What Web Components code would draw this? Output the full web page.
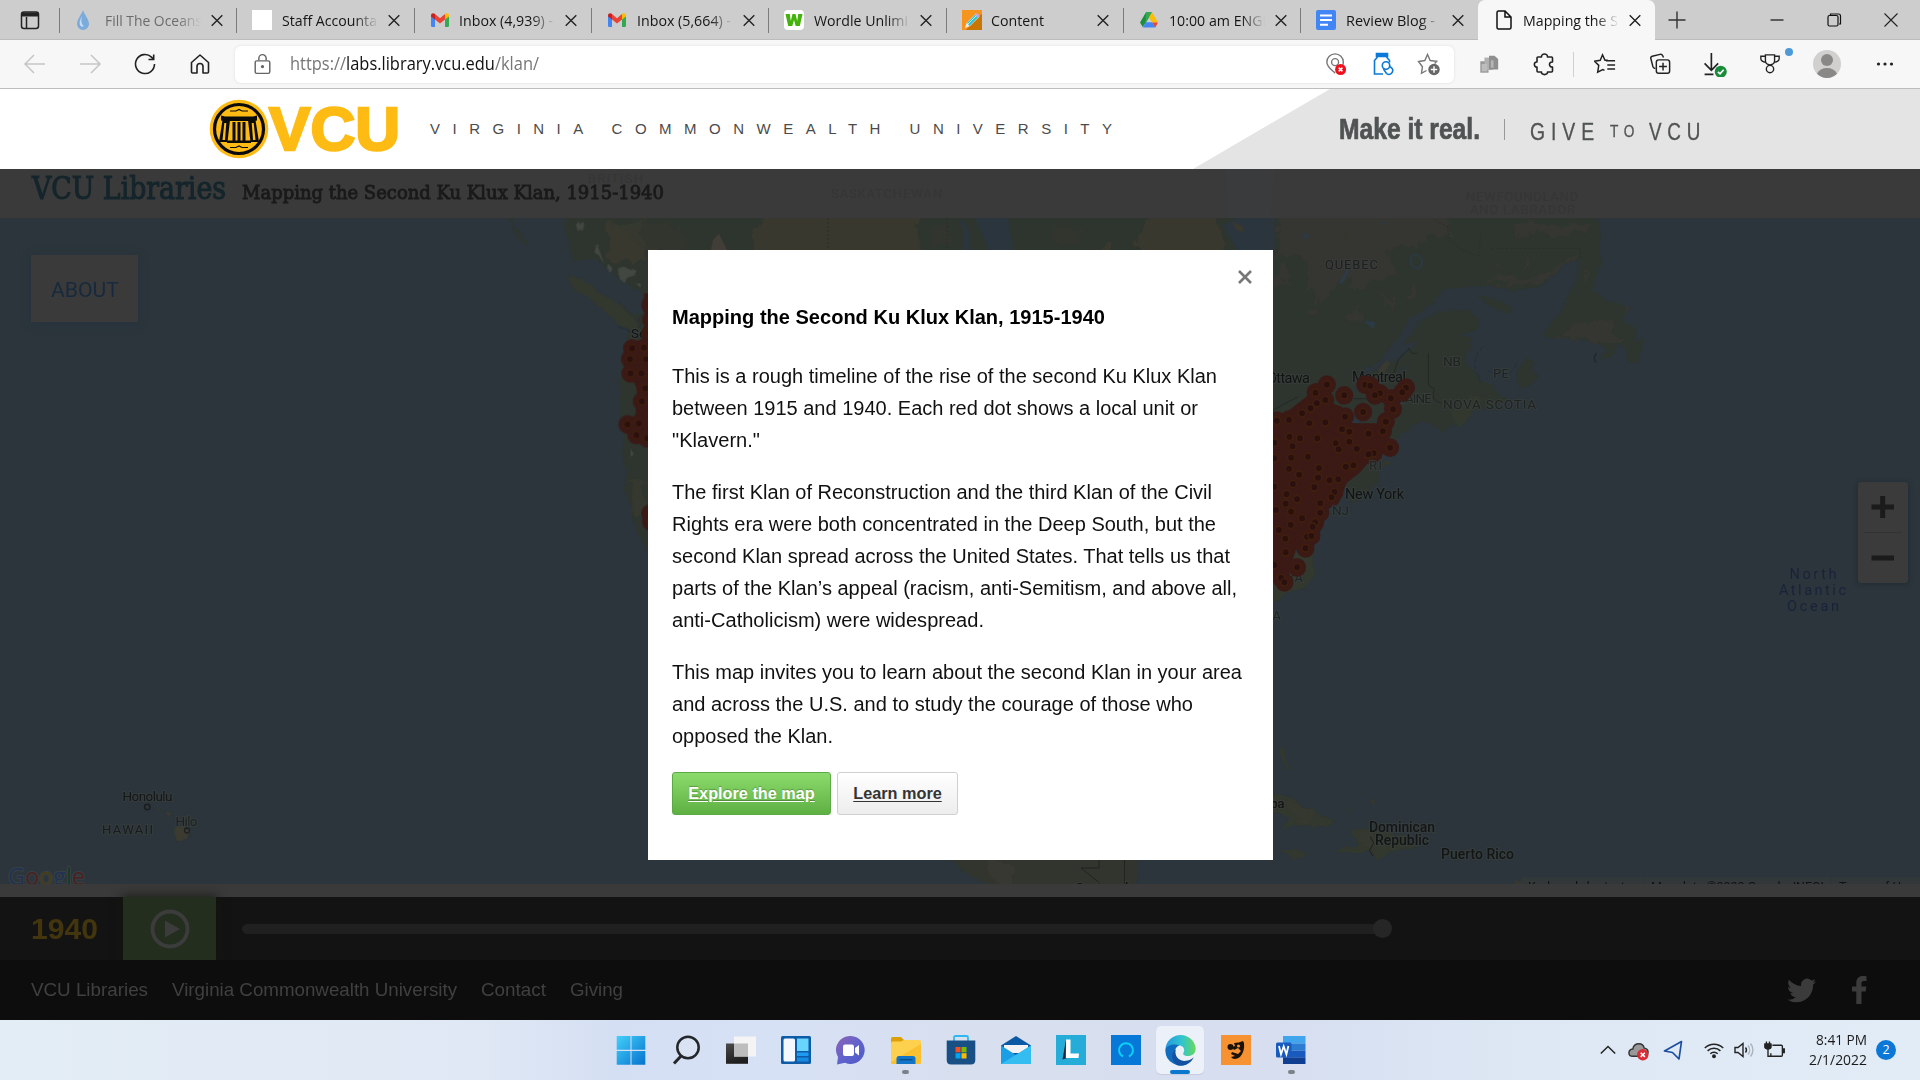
<!DOCTYPE html>
<html lang="en">
<head>
<meta charset="utf-8">
<title>Mapping the Second Ku Klux Klan, 1915-1940</title>
<style>
html,body{margin:0;height:100%;overflow:hidden;background:#fff;font-family:"Liberation Sans",Arial,sans-serif}
</style>
</head>
<body>
<app-desktop></app-desktop>
<script>
const define = (name, html, init) => customElements.define(name, class extends HTMLElement {
  constructor() {
    super();
    const t = document.createElement('template');
    t.innerHTML = html;
    this.attachShadow({ mode: 'open' }).append(t.content.cloneNode(true));
  }
  connectedCallback() { if (init) init.call(this, this.shadowRoot); }
});

/* Text run squeezed or stretched to an exact advance width. */
define('fit-text', `<style>:host{display:inline-block;white-space:pre;overflow:visible;flex:none}
span{display:inline-block;transform-origin:0 50%;white-space:pre}</style><span><slot></slot></span>`, function (r) {
  const s = r.querySelector('span'), w = +this.getAttribute('w');
  const fit = () => {
    s.style.transform = 'none';
    this.style.width = 'auto';
    const n = s.offsetWidth ? s.getBoundingClientRect().width : 0;
    this.style.width = w + 'px';
    if (n) s.style.transform = 'scaleX(' + w / n + ')';
  };
  requestAnimationFrame(fit);
  fit();
});

/* Text run whose tracking is set so that it spans an exact width. */
define('track-text', `<style>:host{display:block;white-space:pre;flex:none}span{display:inline-block}</style><span><slot></slot></span>`, function (r) {
  const s = r.querySelector('span'), w = +this.getAttribute('w'), n = this.textContent.length;
  const fit = () => {
    s.style.letterSpacing = '0px';
    const a = s.getBoundingClientRect().width;
    this.style.width = w + 'px';
    if (a) s.style.letterSpacing = (w - a) / (n - 1) + 'px';
  };
  requestAnimationFrame(fit);
  fit();
});

const ICONS = {
  drop: `<svg viewBox="0 0 20 20"><path d="M8 0C9 4 14 9 14 14a6 6 0 0 1-12 0C2 9 7 4 8 0z" fill="#7cabdb"/><path d="M7 6c-2 4-3 6-2 9 1 2 3 2 4 1-3-2-3-6-2-10z" fill="#c3ddf3"/></svg>`,
  blank: `<svg viewBox="0 0 20 20"><path d="M0 0h20v20H0z" fill="#fff"/></svg>`,
  gmail: `<svg viewBox="0 0 20 20"><path d="M1 5l4 3v9H2.300Q1 17 1 15.500z" fill="#4285f4"/><path d="M19 5l-4 3v9h2.700Q19 17 19 15.500z" fill="#34a853"/><path d="M5 4l5 4.300L15 4v5.600l-5 4-5-4z" fill="#ea4335"/><path d="M1 5.500C1 3 3.500 2.500 5 4v5.500l-4-3z" fill="#c5221f"/><path d="M19 5.500C19 3 16.500 2.500 15 4v5.500l4-3z" fill="#fbbc04"/></svg>`,
  wordle: `<svg viewBox="0 0 20 20"><rect width="20" height="20" rx="4" fill="#fff"/><path d="M1.500 4h4.300l1 7L8.500 4h3l1.700 7 1-7h4.300l-2.700 12h-4.100L10 10l-1.700 6H4.200z" fill="#43b309"/></svg>`,
  pencil: `<svg viewBox="0 0 20 20"><path d="M0 0h20v20H0z" fill="#f7941d"/><path d="M20 4v16H4L18 5z" fill="#c97600"/><path d="M3 18l1.500-5L14 3.500l3.300 3.300L8 16z" fill="#eee"/><path d="M5 13l8.500-8.500 2.700 2.700L7.500 16z" fill="#36bfd0"/><path d="M13 5l2-2 3 3-2 2z" fill="#c9a0dc"/><path d="M6 14l8.500-8.500" stroke="#b7efe6" fill="none"/></svg>`,
  drive: `<svg viewBox="0 0 20 20"><path d="M7 2.300h6L6.500 13 3.700 17 1 12.500z" fill="#1e8e3e"/><path d="M7 2.300h6L10 7.500 6.500 13z" fill="#34a853"/><path d="M10 7.300l3-5 6 10.200h-6z" fill="#fbbc04"/><path d="M6.800 12.300h6.400l3.200 5.200H3.700z" fill="#4285f4"/><path d="M13.200 12.500H19l-2.700 5z" fill="#ea4335"/></svg>`,
  docs: `<svg viewBox="0 0 20 20"><rect width="20" height="20" rx="2" fill="#4285f4"/><path d="M4 5.500h12M4 10h12M4 14.700h8" stroke="#fff" stroke-width="2"/></svg>`,
  page: `<svg viewBox="0 0 20 20" fill="none" stroke="#111" stroke-width="1.500"><path d="M3 2.500Q3 1 4.500 1H11l6 6v10.500q0 1.500-1.500 1.500h-11Q3 19 3 17.500zM11 1v6h6"/></svg>`,
  x: `<svg viewBox="0 0 20 20"><path d="M4.700 5.300l10.600 10.400M15.300 5.300L4.700 15.700" stroke="#222" stroke-width="1.400"/></svg>`,
  tabs: `<svg viewBox="0 0 20 20" fill="none" stroke="#222" stroke-width="1.500"><rect x="1.500" y="2" width="17" height="16.500" rx="2.500"/><path d="M2 4.500h16M6.500 7v11" /><path d="M1.500 4.500h17" stroke-width="4"/></svg>`,
  back: `<svg viewBox="0 0 24 24" fill="none" stroke="#c6c6c6" stroke-width="1.500"><path d="M22 12H2.500M11 3l-9 9 9 9"/></svg>`,
  fwd: `<svg viewBox="0 0 24 24" fill="none" stroke="#c6c6c6" stroke-width="1.500"><path d="M2 12h19.500M13 3l9 9-9 9"/></svg>`,
  reload: `<svg viewBox="0 0 24 24" fill="none" stroke="#222" stroke-width="1.600"><path d="M21.500 12A9.500 9.500 0 1 1 18.500 5.100l1.800 1.900M20.700 2.500v5h-5.200"/></svg>`,
  home: `<svg viewBox="0 0 24 24" fill="none" stroke="#222" stroke-width="1.600" stroke-linejoin="round"><path d="M3.500 10.500L12 3l8.500 7.500V20q0 1-1 1h-4.500v-6.500a3 3 0 0 0-6 0V21H4.500q-1 0-1-1z"/></svg>`,
  lock: `<svg viewBox="0 0 24 24" fill="none" stroke="#666" stroke-width="1.400"><rect x="5" y="8.500" width="14" height="12" rx="1.500"/><path d="M8.500 8V6a3.500 3.500 0 0 1 7 0v2"/><circle cx="12" cy="14" r=".9" fill="#555"/></svg>`,
  pin: `<svg viewBox="0 0 24 24" fill="none" stroke="#777" stroke-width="1.500"><path d="M11 22C8 19 2 15 2 10a9 9 0 0 1 18 0q0 2-1 4"/><circle cx="11" cy="10" r="3.800"/><circle cx="17" cy="18" r="6" fill="#f00f1c" stroke="none"/><path d="M15 16l4 4m0-4l-4 4" stroke="#fff" stroke-width="1.700"/></svg>`,
  coupon: `<svg viewBox="0 0 24 24" fill="none" stroke="#0a7ad9" stroke-width="1.600"><path d="M5.500 1.500h11v3H5.500z" fill="#0a7ad9"/><path d="M6.500 5L3.500 8.500V22H12M15.500 5l3 3.500v2"/><circle cx="15" cy="13.500" r="3.700"/><path d="M12.500 17l3 4.500q2.500 2 4.700 0t1.300-4.500l-3-3"/></svg>`,
  star: `<svg viewBox="0 0 24 24" fill="none" stroke="#777" stroke-width="1.400"><path d="M9.500 18.500l-5 2.800.9-6.500L1.500 9.500l6.300-1 2.700-6 2.700 6 6.500.8-2 2.200"/><circle cx="17" cy="17.500" r="5.700" fill="#666" stroke="none"/><path d="M17 14.300v6.400M13.800 17.500h6.400" stroke="#fff"/></svg>`,
  stack: `<svg viewBox="0 0 24 24"><path d="M2.500 9h9v12.500h-9z" fill="#999"/><path d="M7 5h9v13.500H7z" fill="#b0b0b0"/><path d="M12 3h6l4 3.500V18H12z" fill="#8f8f8f"/><path d="M4 12h6v8H4z" fill="#bdbdbd"/><path d="M14 8h3v8h-3z" fill="#b5b5b5"/></svg>`,
  puzzle: `<svg viewBox="0 0 24 24" fill="none" stroke="#222" stroke-width="1.600" stroke-linejoin="round"><path d="M6 5h3.500c-.5-4 6.500-4 6 0h4q1 0 1 1v4c-4-.5-4 5.500 0 5v4q0 1-1 1h-4c.5 3.500-6.500 3.500-6 0H6q-1 0-1-1v-4c-3.500.500-3.500-5.500 0-5V6q0-1 1-1z"/></svg>`,
  favs: `<svg viewBox="0 0 24 24" fill="none" stroke="#222" stroke-width="1.600"><path d="M15 8h-3L9.300 2 6.800 8l-6.300.9 4.700 4.600-1.200 7.500 5.500-3 2 1M13 8.500h10M14.500 13H23M14.500 17.500H23"/></svg>`,
  collect: `<svg viewBox="0 0 24 24" fill="none" stroke="#222" stroke-width="1.600"><rect x="8" y="7.500" width="14.500" height="14.500" rx="2.500"/><path d="M15.300 10.500v8.500M11 14.700h8.500M7 17q-2-.500-2.700-2L2 6q-.500-2 1.500-2.500L12 1.500q2-.5 3 1.500l.8 2"/></svg>`,
  download: `<svg viewBox="0 0 24 24" fill="none" stroke="#222" stroke-width="1.600"><path d="M9 1v16M2.500 11L9 17.500l6.500-6.500M2.500 21.500H11"/><circle cx="18" cy="19" r="5.800" fill="#198c3c" stroke="none"/><path d="M15.300 19l2 2 3.500-4" stroke="#fff"/></svg>`,
  medal: `<svg viewBox="0 0 24 24" fill="none" stroke="#222" stroke-width="1.500"><path d="M7 2h10v6.500q0 4-5 4.500-5-.5-5-4.500zM7 3.500H2v2.700q0 3 5.500 4M17 3.500h5v2.700q0 3-5.500 4"/><circle cx="12" cy="17.500" r="4"/></svg>`,
  avatar: `<svg viewBox="0 0 28 28"><circle cx="14" cy="14" r="14" fill="#d2d0ce"/><circle cx="14" cy="10" r="6" fill="#8a8886"/><path d="M4 23.800Q7 18 14 18t10 5.800A14 14 0 0 1 4 23.800z" fill="#8a8886"/></svg>`,
  dots: `<svg viewBox="0 0 24 24" fill="#222"><circle cx="5.500" cy="12" r="1.600"/><circle cx="12" cy="12" r="1.600"/><circle cx="18.500" cy="12" r="1.600"/></svg>`,
  plus: `<svg viewBox="0 0 20 20"><path d="M10 1.500v17M1.500 10h17" stroke="#333" stroke-width="1.400"/></svg>`,
  min: `<svg viewBox="0 0 20 20"><path d="M3.500 10h13" stroke="#111" stroke-width="1.200"/></svg>`,
  max: `<svg viewBox="0 0 20 20" fill="none" stroke="#111" stroke-width="1.200"><rect x="4" y="5.500" width="10" height="10.500" rx="1.500"/><path d="M6.500 5V4h8q2 0 2 2v8h-1.500"/></svg>`,
  close: `<svg viewBox="0 0 20 20"><path d="M3.500 3.500l13 13M16.500 3.500l-13 13" stroke="#222" stroke-width="1.100"/></svg>`,
  win: `<svg viewBox="0 0 30 30"><defs><linearGradient id="g" x2="1" y2="1"><stop stop-color="#43d0fb"/><stop offset="1" stop-color="#0672cd"/></linearGradient></defs><path d="M.7 1h13.800v13.800H.7zM15.500 1h13.800v13.800H15.500zM.7 16h13.800v13.800H.7zM15.500 16h13.800v13.800H15.500z" fill="url(#g)"/></svg>`,
  search: `<svg viewBox="0 0 30 30" fill="none" stroke="#24262a"><circle cx="17" cy="12.500" r="10.700" stroke-width="2.500" fill="#d9e3f3"/><path d="M10 21l-7 7.500" stroke-width="3"/></svg>`,
  task: `<svg viewBox="0 0 30 30"><defs><linearGradient id="g" y2="1" x2=".3"><stop stop-color="#4a4a4a"/><stop offset="1" stop-color="#1e1e1e"/></linearGradient></defs><path d="M0 8.500h22v20.300H0z" fill="url(#g)"/><path d="M8 1.500h22v20H8z" fill="#f4f4f4"/><path d="M8 8.500h14v13H8z" fill="#bdbdbd"/></svg>`,
  widgets: `<svg viewBox="0 0 30 30"><rect y="1" width="30" height="28" rx="1.500" fill="#0e5ba8"/><rect x="2.500" y="3.500" width="11.500" height="23" rx="1.500" fill="#f4f7fb"/><path d="M16 3.500h11.500V16H16z" fill="#69d5fa"/><path d="M16 17.500h11.500v3.500H16z" fill="#1c9bf0"/><path d="M16 22.500h11.500v4H16z" fill="#168be0"/></svg>`,
  chat: `<svg viewBox="0 0 30 30"><defs><linearGradient id="g" x2="1" y2="1"><stop stop-color="#8e62b4"/><stop offset=".5" stop-color="#6263cd"/><stop offset="1" stop-color="#4a58c8"/></linearGradient></defs><path d="M15 1a14 14 0 1 1-6 26.800L1 29.500 2 22A14 14 0 0 1 15 1z" fill="url(#g)"/><rect x="7" y="9.500" width="11" height="11.500" rx="2" fill="#fff"/><path d="M19 13l4-3v10.500l-4-3z" fill="#fff"/></svg>`,
  files: `<svg viewBox="0 0 30 30"><path d="M0 3.500Q0 2 1.500 2H10l3 3v8H0z" fill="#dda007"/><path d="M0 8q0-1.500 1.500-1.500H10L13 5h15.500Q30 5 30 6.500v21q0 1.500-1.500 1.500h-27Q0 29 0 27.500z" fill="#fdd04e"/><path d="M0 27L30 9v18.500Q30 29 28.500 29h-27Q0 29 0 27.500z" fill="#fbc02f"/><path d="M5.500 29v-5.500q0-2.500 2.500-2.500h14q2.500 0 2.500 2.500V29z" fill="#1375c8"/><path d="M8.500 24.700h13" stroke="#0a4e8e" stroke-width="1.300"/></svg>`,
  store: `<svg viewBox="0 0 30 30"><path d="M8 6V2.500Q8 1 9.500 1h11Q22 1 22 2.500V6" fill="none" stroke="#2db8f2" stroke-width="1.800"/><path d="M.7 5.500h28.600V25q0 4.500-4.500 4.500H5.200Q.7 29.500.7 25z" fill="#185086"/><path d="M9.500 12h5v5.300h-5z" fill="#f25022"/><path d="M15.500 12h5v5.300h-5z" fill="#7fba00"/><path d="M9.500 18.200h5v5.300h-5z" fill="#00a4ef"/><path d="M15.500 18.200h5v5.300h-5z" fill="#ffb900"/></svg>`,
  mail: `<svg viewBox="0 0 30 30"><path d="M0 10.500L15 1l15 9.500V20H0z" fill="#0c59a4"/><path d="M3 10h24v8H3z" fill="#f3f3f5"/><path d="M0 10.500L15 20l15-9.500V29H0z" fill="#1a9fe4"/><path d="M0 29L22 15.500l8-5V29z" fill="#35bdf1"/></svg>`,
  L: `<svg viewBox="0 0 30 30"><path d="M0 0h30v30H0z" fill="#25acd8"/><path d="M10 4.500L6.500 24.500 11 23z" fill="#0a2540"/><path d="M10 4.500h4.500v14H23l-.5 4.500H9.800z" fill="#fff"/></svg>`,
  alexa: `<svg viewBox="0 0 30 30"><path d="M0 0h30v30H0z" fill="#0778d8"/><path d="M12 21.500A7 7 0 1 1 18 21.500" fill="none" stroke="#0cd0f5" stroke-width="2"/></svg>`,
  edge: `<svg viewBox="0 0 30 30"><defs><linearGradient id="g" x2="1"><stop stop-color="#2299dd"/><stop offset=".55" stop-color="#32c5cf"/><stop offset="1" stop-color="#68d859"/></linearGradient></defs><path d="M.5 13A14.700 14.700 0 0 1 29.700 13c0 6-5 8-10 7-2-.5-2.700-1.500-1.700-3 2-4-1.500-7-5-7C7 10 1 14 1 19z" fill="url(#g)"/><path d="M.5 14C2 9.500 9 8 14 10c-3 1-5.500 5-4 10s7 9 13.500 7A14.700 14.700 0 0 1 .5 14z" fill="#126cbd"/><path d="M10.500 14c-2 7 4 12 10 11 4-.5 6-2.500 7.500-3.500-3 6-9 9-15.500 7.700C6 26 5 18 10.500 14z" fill="#1352a0"/></svg>`,
  orange: `<svg viewBox="0 0 30 30"><path d="M0 0h30v30H0z" fill="#f69232"/><path d="M13 8q5 0 9-2l1 2q1 8-4 14-6 4-9 0l4-1-4-2 1-2 6 2 3-3-3-3-4 2-2-3 3-1z" fill="#1b1208"/><circle cx="9.500" cy="12" r="3" fill="#1b1208"/><circle cx="17.500" cy="11" r="1.500" fill="#f69232"/></svg>`,
  word: `<svg viewBox="0 0 30 30"><path d="M7 1h22.500v7.500H7z" fill="#41a5ee"/><path d="M7 8.500h22.500v7H7z" fill="#2b7cd3"/><path d="M7 15.500h22.500v6.800H7z" fill="#185abd"/><path d="M7 22.300h22.500V29H7z" fill="#103f91"/><rect y="7.500" width="15.500" height="15" rx="1.500" fill="#185abd"/><path d="M3 11l2 8.300 2.700-8 2.700 8 2-8.300" fill="none" stroke="#fff" stroke-width="1.800"/></svg>`,
  chev: `<svg viewBox="0 0 20 20"><path d="M2 14l8-8 8 8" fill="none" stroke="#222" stroke-width="1.600"/></svg>`,
  cloud: `<svg viewBox="0 0 22 20"><path d="M5 16Q1 16 1 12.500T5 8.500Q6 3 11.500 3 16 3 17 7.500q4 .5 4 4T17 16z" fill="#999" stroke="#333" stroke-width="1.500"/><circle cx="15.500" cy="14.500" r="6" fill="#d92c34"/><path d="M13.300 12.300l4.400 4.400m0-4.400l-4.400 4.400" stroke="#fff" stroke-width="1.600"/></svg>`,
  loc: `<svg viewBox="0 0 20 20"><path d="M18.500 1.500L1.500 11l8 1.500L16 19z" fill="none" stroke="#1b4ea0" stroke-width="1.700" stroke-linejoin="round"/></svg>`,
  wifi: `<svg viewBox="0 0 20 20" fill="none" stroke="#222" stroke-width="1.500"><path d="M.8 8a13 13 0 0 1 18.400 0M3.600 10.900a9 9 0 0 1 12.800 0M6.300 13.700a5.200 5.200 0 0 1 7.400 0"/><circle cx="10" cy="16.300" r="1.200" fill="#222"/></svg>`,
  sound: `<svg viewBox="0 0 20 20" fill="none" stroke="#222" stroke-width="1.400"><path d="M1 7.500h3L9 3.500v13L4 12.500H1zM11.500 7.500a4 4 0 0 1 0 5"/><path d="M14 5.500a7 7 0 0 1 0 9M16.500 3.500a10 10 0 0 1 0 13" stroke="#aab3bc"/></svg>`,
  batt: `<svg viewBox="0 0 20 20" fill="none" stroke="#222" stroke-width="1.300"><path d="M8 5h8.500q1 0 1 1v8.500q0 1-1 1h-10V12.500"/><path d="M18.300 8.500h1v3.500h-1z" fill="#222"/><path d="M1 4h5.500v2.500q0 2-2.700 2T1 6.500zM2.300 1.500v3M5.200 1.500v3M3.800 8v7.500h2.500" fill="none"/><path d="M1 4h5.500v2.500q0 2-2.700 2T1 6.500z" fill="#222"/></svg>`,
  twitter: `<svg viewBox="0 0 24 24"><path d="M23.950 4.570a10 10 0 0 1-2.820.77 4.960 4.960 0 0 0 2.160-2.720c-.950.550-2 .960-3.130 1.190a4.920 4.920 0 0 0-8.380 4.480C7.690 8.090 4.070 6.130 1.640 3.160a4.820 4.820 0 0 0-.67 2.480c0 1.710.87 3.210 2.190 4.100a4.900 4.900 0 0 1-2.230-.620v.060a4.920 4.920 0 0 0 3.950 4.830 5 5 0 0 1-2.210.080 4.940 4.940 0 0 0 4.600 3.420A9.870 9.870 0 0 1 0 19.540a13.990 13.990 0 0 0 7.550 2.210c9.050 0 14-7.500 14-13.980 0-.210 0-.420-.020-.630a9.940 9.940 0 0 0 2.420-2.570z" fill="#3b3b3b"/></svg>`,
  fb: `<svg viewBox="0 0 16 28"><path d="M15.500.4v4.500h-2.600c-2 0-2.400 1-2.400 2.400v3.100h4.900l-.7 5h-4.200V28H5.300V15.400H1v-5h4.300V6.800C5.300 2.500 7.900 0 11.800 0c1.800 0 3.400.2 3.700.4z" fill="#3b3b3b"/></svg>`
};
define('ui-icon', `<style>:host{display:flex;flex:none;align-items:center;justify-content:center}svg{display:block}</style>`, function (r) {
  if (r.querySelector('svg')) return;
  r.innerHTML += ICONS[this.getAttribute('name')];
  const s = this.getAttribute('size') || 20;
  const v = r.querySelector('svg');
  v.style.width = s + 'px'; v.style.height = s + 'px';
});

define('browser-tab', `<style>
:host{display:flex;align-items:center;box-sizing:border-box;width:177.350px;height:40px;flex:none;position:relative;padding-left:16px;font:15px "Open Sans","Noto Sans",sans-serif;color:#151515}
:host::before{content:"";position:absolute;left:0;top:8px;height:25px;width:1px;background:#7b7b7b}
:host([faded]){color:#6c6c6c}
:host([active]){background:#f7f7f7;border-radius:7px 7px 0 0}
:host([active])::before{display:none}
.t{margin-left:9.500px;width:96px;overflow:hidden;-webkit-mask:linear-gradient(90deg,#000 76%,transparent 100%);line-height:24px}
:host([full]) .t{-webkit-mask:none}
.c{margin-left:6px}
</style><span class="i"></span><div class="t"><slot></slot></div><ui-icon class="c" name="x"></ui-icon>`, function (r) {
  r.querySelector('.i').innerHTML = `<ui-icon name="${this.getAttribute('icon')}"></ui-icon>`;
});

define('tab-strip', `<style>
:host{display:flex;height:40px;background:#cdcdcd;box-shadow:inset 0 -1px #bcbcbc}
.m{width:59px;display:flex;justify-content:center;align-items:center}
.n{margin-left:12px;display:flex;align-items:center}
.w{margin-left:auto;display:flex;align-items:center;gap:37px;padding-right:19px}
</style>
<div class="m"><ui-icon name="tabs"></ui-icon></div>
<browser-tab icon="drop" faded><fit-text w="97">Fill The Oceans</fit-text></browser-tab>
<browser-tab icon="blank"><fit-text w="95">Staff Accounta</fit-text></browser-tab>
<browser-tab icon="gmail"><fit-text w="94">Inbox (4,939) -</fit-text></browser-tab>
<browser-tab icon="gmail"><fit-text w="94">Inbox (5,664) -</fit-text></browser-tab>
<browser-tab icon="wordle"><fit-text w="94">Wordle Unlimi</fit-text></browser-tab>
<browser-tab icon="pencil" full><fit-text w="53">Content</fit-text></browser-tab>
<browser-tab icon="drive"><fit-text w="101">10:00 am ENGL</fit-text></browser-tab>
<browser-tab icon="docs"><fit-text w="89">Review Blog -</fit-text></browser-tab>
<browser-tab icon="page" active><fit-text w="95">Mapping the S</fit-text></browser-tab>
<div class="n"><ui-icon name="plus"></ui-icon></div>
<div class="w"><ui-icon name="min"></ui-icon><ui-icon name="max"></ui-icon><ui-icon name="close"></ui-icon></div>`);

define('tool-bar', `<style>
:host{display:flex;align-items:center;height:48px;background:#f7f7f7;border-bottom:1px solid #bdbdbd;padding-left:7px;box-sizing:content-box;width:1913px}
ui-icon{width:55px}
.url{display:flex;align-items:center;width:1219px;height:37px;border-radius:6px;background:#fff;box-shadow:0 0 3px #ddd;margin-left:8px;box-sizing:border-box;font:17.500px "Open Sans","Noto Sans",sans-serif;color:#767676}
.url b{font-weight:400;color:#111}
.url fit-text{margin-right:auto;margin-top:-2px;margin-left:1px}
.url ui-icon{width:46px}.url .l{width:54px}
.url .k{width:47px}
.url .s{margin-right:2px}
.r{display:flex;align-items:center;margin-left:7px}
.sep{width:1px;height:25px;background:#d0d0d0;margin:0 3px 0 2px}
.a{width:60px}
.md{position:relative;display:flex}.md i{position:absolute;right:4px;top:-5px;width:8px;height:8px;border-radius:50%;background:#4c9ad8}
</style>
<ui-icon name="back" size="24"></ui-icon><ui-icon name="fwd" size="24"></ui-icon><ui-icon name="reload" size="24"></ui-icon><ui-icon name="home" size="24"></ui-icon>
<div class="url"><ui-icon class="l" name="lock" size="25"></ui-icon><fit-text w="249">https://<b>labs.library.vcu.edu</b>/klan/</fit-text><ui-icon name="pin" size="22"></ui-icon><ui-icon class="k" name="coupon" size="24"></ui-icon><ui-icon class="s" name="star" size="24"></ui-icon></div>
<div class="r"><ui-icon name="stack" size="22"></ui-icon><ui-icon name="puzzle" size="24"></ui-icon><div class="sep"></div><ui-icon name="favs" size="22"></ui-icon><ui-icon name="collect" size="22"></ui-icon><ui-icon name="download" size="25"></ui-icon><div class="md"><ui-icon name="medal" size="22"></ui-icon><i></i></div><ui-icon class="a" name="avatar" size="28"></ui-icon><ui-icon name="dots" size="24"></ui-icon></div>`);

define('university-header', `<style>
:host{display:flex;align-items:center;height:80px;background:#fff;box-sizing:border-box;padding-left:209px}
.seal{width:60px;height:60px;flex:none;display:block}
.vcu{font:bold 62px/62px "Liberation Sans",sans-serif;color:#fdbb14;-webkit-text-stroke:2.500px #fdbb14;margin-left:0}
track-text{font:15px "Liberation Sans",sans-serif;color:#4b4b4b;margin-left:30px;margin-top:-2px}
.right{margin-left:auto;width:727px;height:80px;background:#e4e4e4;clip-path:polygon(137px 0,100% 0,100% 100%,0 100%);display:flex;align-items:center;box-sizing:border-box;padding-left:146px;color:#505353}
.mk{font:bold 29px/34px "Liberation Sans",sans-serif;-webkit-text-stroke:.700px #505353}
.bar{width:1px;height:21px;background:#999;margin:0 25px 0 24px}
.g{font:23px/28px "Liberation Sans",sans-serif;display:flex;align-items:center;padding-top:5px;-webkit-text-stroke:.3px #505353}
.g fit-text{letter-spacing:7px}.sm{font-size:17px;margin:0 9px 0 10px}
</style>
<svg class="seal" viewBox="0 0 60 60"><circle cx="30" cy="30" r="29.300" fill="#fdbb14"/><circle cx="30" cy="30" r="24.500" fill="#fdbb14" stroke="#0b0b0b" stroke-width="3.200"/>
<g fill="#0b0b0b"><path d="M12 16.500l4 1h28l4-1v5l-3 .5H15l-3-.5z"/><path d="M13.500 21l-3.500 22h8.500l2.500-22zm1.800 3h2l-1.300 17h-2.500z" fill-rule="evenodd"/><path d="M46.500 21l3.500 22h-8.500l-2.500-22zm-1.800 3h-2l1.300 17h2.500z" fill-rule="evenodd"/><path d="M23.500 23h3v18.500h-3zM28.500 23h3v18.500h-3zM33.500 23h3v18.500h-3zM18 41.500h24v2.500H18z"/></g>
<path d="M21 12h6l3-1.500 3 1.500h6M21 48.500h6l3-1.500 3 1.500h6" stroke="#0b0b0b" stroke-width="1.200" fill="none"/></svg>
<fit-text class="vcu" w="131">VCU</fit-text>
<track-text w="682">VIRGINIA COMMONWEALTH UNIVERSITY</track-text>
<div class="right"><fit-text class="mk" w="141">Make it real.</fit-text><div class="bar"></div><div class="g"><fit-text w="70">GIVE</fit-text><fit-text class="sm" w="30">TO</fit-text><fit-text w="57">VCU</fit-text></div></div>`);

define('map-header', `<style>
:host{display:flex;align-items:baseline;height:49px;background:#3a3a3a;padding-left:32px;box-sizing:border-box;position:relative;overflow:hidden;font-family:"DejaVu Serif",serif;font-weight:400}
.b{font-size:31px;line-height:39px;color:#14252b;-webkit-text-stroke:1.100px #14252b}
.t{font-size:19px;color:#1a1a1a;margin-left:16px;-webkit-text-stroke:.900px #1a1a1a}
svg{position:absolute;inset:0}
fit-text{position:relative}
</style><svg width="1920" height="49" viewBox="0 169 1920 49" font-family="Roboto" font-size="13" fill="#353535"><path d="M1225 168h50l-4 50h-44z" fill="#3a3b3c"/><text x="588" y="183" textLength="55">BRITISH</text><text x="831" y="198" textLength="111">SASKATCHEWAN</text><text x="1466" y="201" textLength="112">NEWFOUNDLAND</text><text x="1470" y="213.500" textLength="105">AND LABRADOR</text></svg>
<fit-text class="b" w="194">VCU Libraries</fit-text><fit-text class="t" w="422">Mapping the Second Ku Klux Klan, 1915-1940</fit-text>`);

define('klavern-map', `<style>
:host{display:block;position:relative;height:666px;background:#2b353b;overflow:hidden}
svg{display:block;position:absolute;inset:0}
.about{position:absolute;left:31px;top:37px;width:107px;height:67px;background:#3a3a3b;display:flex;align-items:center;justify-content:center;font:21px Roboto,sans-serif;color:#172a3d;box-shadow:0 2px 8px #283240}
.about fit-text{margin-top:2px}
.zoom{left:1858px;top:264px;width:50px;height:101px;border-radius:3px;background:#3b3b3b;box-shadow:0 1px 5px #202a33}
svg.zoom{inset:auto;left:1858px;top:264px}
</style>
<svg width="1920" height="666" viewBox="0 218 1920 666">
<defs><filter id="rough" filterUnits="userSpaceOnUse" x="0" y="180" width="1920" height="740"><feTurbulence type="fractalNoise" baseFrequency=".07" numOctaves="3" seed="4"/><feDisplacementMap in="SourceGraphic" scale="22" xChannelSelector="R" yChannelSelector="G"/><feGaussianBlur stdDeviation=".5"/></filter>
<filter id="coast" filterUnits="userSpaceOnUse" x="0" y="180" width="1920" height="740"><feTurbulence type="fractalNoise" baseFrequency=".12" numOctaves="2" seed="9"/><feDisplacementMap in="SourceGraphic" scale="6" xChannelSelector="R" yChannelSelector="G"/></filter></defs>
<g filter="url(#coast)">
<g transform="translate(0 160) scale(.42088 .33333)">
<path d="M1204 144h18l-2 50 20 20 8 25 10 15-14-2-24-38z" fill="#2f352e"/>
<path d="M1320 144h260v1030h-40q-40-80-44-140l-14-40 8-50-12-60 4-60-8-30 0-180 20-60-5-90-20-40 25 30 38 10 10-30-20-40-30-20-40-40-30-30-14-60 10-25-10-70-26-10z" fill="#2f352e"/>
<path d="M1350 345l32 10 40 40 50 40 40 50 10 30-50-20-60-70-50-35z" fill="#31372e"/>
</g>
<path d="M560 208h1039l1 52H573z" fill="#2f352e"/>
</g>
<g filter="url(#rough)">
<g transform="translate(0 160) scale(.42088 .33333)"><path d="M1450 190l40-10 60 30 8 80-40-20-50 10-20-30zM1500 960l30 20 10 90-30-20z" fill="#36372f"/></g>
<path d="M760 210h165l-8 20 10 37H740l14-26zM1100 260q10-30 15 0zM1150 210h70l4 52h-92zM605 260l4-36 20 8 20 28z" fill="#37372f"/>
<path d="M640 222l40 6 10 18-40 6zM935 225h12v20h-14zM1050 226l34 2-10 18-24-4z" fill="#33362f"/>
</g>
<path d="M957 218q15 5 12 32h-6q4-20-6-32zM975 218h33l5 32h-24zM1223 225q20-12 48-7 0 20 6 32h-40z" fill="#2b353d"/>
<path d="M828 218v32M947 218v32" stroke="#292c28" stroke-dasharray="2 2"/>
<path d="M1232 221l10 5 2 6-8-2z" fill="#38382f"/>
<path d="M711 250l2-10 6-6 8 16z" fill="#413e38"/>
<g transform="translate(0 160) scale(.42088 .33333)">
<g fill="#424642" filter="url(#coast)"><path d="M1368 195q8-20 10 0 8-18 10 0l-4 20-5-8-6 8zM1418 250l10 35 8 26-12-20-12-15zM1444 310l12 15-6 14-8-10zM1468 325l14-6 15 10 16 2-6 15-18 8-5 16-14-16zM1510 370l12 0 0 14zM1498 865l8 18-8 8z"/></g>
<path d="M1468 500l20 8 15 12M1525 465l-8 15 8 10-6 12" fill="none" stroke="#1f2c40" stroke-width="2"/>
</g>
<g filter="url(#coast)"><g transform="translate(1260 210) scale(.42088 .33333)">
<path d="M36 4H804l2 90-20 34-60 30-20 30-40 42-60 12-50-10-70 0-50 4-28 50-50 35-22 50-40 60-10 25-40 20-20 40-12 80-50 60-60 20-90 40-20-300z" fill="#2f352e"/>
<path d="M335 500l60-110 60-60 40-30 26 30-10 30-40 16 30 26-10 30-15 50 0 40 25 0 16 20 36-20 12 40-60 30-50 60-25 20-10-25-40-15-60 60-40 60 0 70-60 60-20-60 20-120 20-80-60-60z" fill="#2f352e"/>
<path d="M240 500l100-60 55-70 20 10-60 80-50 60z" fill="#2f352e"/>
<path d="M370 350q40-50 110-50 30 0 40 30 0 35-30 40l-50 5-100 30z" fill="#2f352e"/>
<path d="M420 385l50-8 32 8-20 60 30 45 50 60 30 20-40 20-100 20z" fill="#2f352e"/>
<path d="M515 255l40 10 48 30-14 14-30-10zM615 530l-6-40 25-50 16 20-4 22 20 24-50 36z" fill="#2f352e"/>
<path d="M455 605l0 30 18 18 10-12 32-46 18-30-30-10z" fill="#31372e"/>
<path d="M780 150l30-10 4 8-28 95 20 5 10 15 10 15 30 5 20 10-15 30 10 20 25 10-10 35 15 0 10-10-4 35-8 45-26-6 0-30-20-20-20 40-28 15 18-40-40-24-50-10-50 4-12-14 30-46 20-40 30-80 10-50z" fill="#2f352e"/>
<path d="M31 1180l30-30 50-20 20-40-8-60-30-10-62 40zM290 750l26 10-26 10z" fill="#31372e"/>
</g></g>
<g filter="url(#rough)"><g transform="translate(1260 210) scale(.42088 .33333)" fill="#353630">
<path d="M36 4H440l18 70-70 12-30 30-20-10-30 20-10 40 40 50-40-10-40 10-50 40 30-60-60 20-40 60-20-40 10-40-30-60-55 4z"/>
<path d="M600 40h180l4 44-40-20-40 20-50-20-44 6zM530 222l90 4 60-12 40-45 40-25-30 2-50 40-30 20-60-6zM110 300l30-20 0 30-30 20zM290 250l20 20-10 20zM350 240l20-20 6 20-16 20zM210 320l20-20 10 30zM180 60l30 20-20 20zM620 140l20 10-8 24zM560 150l16 0 0 20z"/>
<path d="M710 370l40-26 40-20 50 30 20 40-20 10-50-20-50 5-30 0zM860 300l14 4-12 10zM770 170l10 20-10 30z"/>
<path d="M40 180l30-20-10 60-20 30z"/>
</g></g>
<g transform="translate(1260 210) scale(.42088 .33333)">
<path d="M20 0h15v98l-2 30-20-10z" fill="#2b353b"/>
<path d="M360 138q14-10 25 12 0 32-20 22-12-16-5-34z" fill="none" stroke="#2b3a42" stroke-width="5"/><path d="M215 165l-12 20-16 38 8-2 18-40z" fill="#2b3b48"/>
<path d="M245 332l30 4-6 22zM100 70l18 4-12 16zM290 35l12 6-8 6z" fill="#2b3a44"/>
<path d="M800 430q-12 16 0 28" fill="none" stroke="#1c2830" stroke-width="3"/>
<path d="M280 480l20-30 10 10-20 40z" fill="#383930"/>
<path d="M400 430v95l14 12q-10 35 16 42M318 490l10-40 26-34 8 14h12M222 566h80M31 600l60-40" fill="none" stroke="#1f2421" stroke-width="2"/>
<path d="M415 30l30 20 5 40 30 30 40 20 5-80M550 115h210v30" fill="none" stroke="#282c2a" stroke-width="2" stroke-dasharray="6 5"/>
<path d="M530 410q-30 40-15 80l10 30M610 460q-20 60-70 20" fill="none" stroke="#202d40" stroke-width="2" stroke-dasharray="14 6"/>
</g>
<g class="dots"></g>
<g filter="url(#coast)">
<g transform="translate(1260 740) scale(.42088 .33333)" fill="#31372e">
<path d="M50 20l14 20-4 20 14 25-4 5-16-20-10-35zM21 160l40 5 60 45 20 12 40 22-20 20-60-10-50 10 20-30-50-20zM260 178l16 2-8 10zM200 208l24 0-10 6z"/><path d="M212 264l70 4 60 20 36 35-60 10-38 26-20-25-60 4-24-10 60-8z"/><path d="M50 330l40-2 24 20-30 10z"/>
<path d="M60 175l70 40-10 40-40-6 10-25-30-20zM230 270l40 5v50l-26-6z" fill="#36372f"/><path d="M605 425l18-2v12h-18z" fill="#38382f"/></g>
<g transform="translate(640 740) scale(.40816 .33333)"><path d="M750 350h470l-6 102H888l-80-45z" fill="#31362f"/><path d="M850 350l70 30-10 72-40-24-20-30z" fill="#373730"/></g>
<g transform="translate(0 760) scale(.42088 .33333)" fill="#3a3b30"><path d="M371 145l12 2-4 8zM392 155l18 8-6 12zM416 200l20 0 16 20-18 22-14 4-6-30z"/></g>
</g>
<path d="M1370.300 836.600l3.400 6.700-4.200 6.700 3.400 6" fill="none" stroke="#1d211e"/>
<path d="M1081 868h18v-8M1081 868l26 21M1124.500 860v24" stroke="#1f2321" fill="none"/>
<g class="labels" font-family="Roboto" font-size="13" stroke-linejoin="round"></g>
<circle cx="147.300" cy="807" r="2.700" fill="none" stroke="#1b1d1e" stroke-width="1.500"/><circle cx="187" cy="830.500" r="2.500" fill="none" stroke="#1f2020" stroke-width="1.300"/>
<path d="M1521.500 877H1920v7H1521.500z" fill="#323739"/><path d="M1644.500 877v7M1831.500 877v7" stroke="#2b353b"/>
<g font-family="Roboto" font-size="12.500" fill="#111"><text x="1528" y="891" textLength="103">Keyboard shortcuts</text><text x="1651" y="891" textLength="173">Map data ©2022 Google, INEGI</text><text x="1839" y="891" textLength="75">Terms of Use</text></g>
<g font-family="Open Sans" font-size="24" stroke="#363f43" stroke-width="2.500" paint-order="stroke" stroke-linejoin="round"><text x="8" y="884.500" textLength="77" lengthAdjust="spacingAndGlyphs"><tspan fill="#223253">G</tspan><tspan fill="#4b201e">o</tspan><tspan fill="#4a3c14">o</tspan><tspan fill="#223253">g</tspan><tspan fill="#1c3a25">l</tspan><tspan fill="#4b201e">e</tspan></text></g>
</svg>
<div class="about"><fit-text w="68">ABOUT</fit-text></div>
<svg class="zoom" viewBox="0 0 50 101"><path d="M6 50.500h38" stroke="#323232"/><path d="M13.500 25h22.500M24.700 14v22M13.500 76h22.500" stroke="#1b1b1b" stroke-width="5"/></svg>`, function (r) {
  const east = '159,524 200,556 132,548 135,580 155,570 250,524 262,527 285,550 273,556 347,533 338,547 311,565 316,598 245,606 202,620 299,635 69,629 100,610 117,640 155,637 195,658 212,665 258,671 292,664 34,698 95,685 136,685 70,680 212,695 180,700 230,716 187,718 309,713 270,730 258,733 77,709 114,740 74,743 222,766 204,770 69,776 93,794 140,775 138,803 165,811 186,808 78,822 129,832 177,846 170,862 63,853 88,868 61,881 143,880 143,908 74,905 100,925 131,937 125,950 73,944 112,980 122,978 60,986 108,1015 61,1027 88,1072 50,1104 58,1117 45,960 34,1065 34,745 38,900 40,632 34,830 120,595';
  const west = '1545,435 1547,480 1545,520 1502,565 1530,563 1497,597 1535,597 1498,640 1524,640 1533,685 1525,724 1491,793 1518,790 1512,825 1538,835 1545,1060 1547,1085';
  const draw = (str, tf, hull) => {
    const p = str.split(' ').map(s => s.split(','));
    return `<g transform="${tf}"><path d="${hull}" fill="#3b1a16"/>` +
      p.map(([x, y]) => `<ellipse cx="${x}" cy="${y}" rx="21.500" ry="28" fill="#3b1a16"/>`).join('') +
      p.map(([x, y]) => `<ellipse cx="${x}" cy="${y}" rx="10" ry="13" fill="#42200c"/><ellipse cx="${x}" cy="${y}" rx="7" ry="9" fill="#2b1010"/>`).join('') + '</g>';
  };
  /* text, x, baseline, width, colour, size, weight, under the dots */
  const L = [
    ['QUEBEC',1325,268.700,53,'#1d201f',13],['NB',1443,365.500,18,'#1f2321',13.500],['PE',1493,378,16,'#1f2321',13],['NOVA SCOTIA',1443,409,93,'#1f2321',13.500],
    ['MAINE',1394,403,38,'#1f2321',13.500,400,1],['Montreal',1352,382,54,'#121413',14.500,400,1],['Ottawa',1267,382.500,43,'#121413',14.500],['RI',1369,470,13,'#222624',13],
    ['New York',1345,499,59,'#111314',14.500],['NJ',1332,515,17,'#1e2326',13.500],['VA',1286,582,17,'#1e2325',13,400,1],['GA',1264,619.500,17,'#1e2325',13],
    ['North',1789.500,578.500,47,'#18233a',14.500],['Atlantic',1779,595,67,'#18233a',14.500],['Ocean',1787,611,52,'#18233a',14.500],
    ['Dominican',1369,832,66,'#141616',14,500],['Republic',1375,844.500,54,'#141616',14,500],['Puerto Rico',1441,858.500,73,'#141616',14,500],
    ['Cuba',1255,807.500,29.500,'#141616',13.500,500],['HAWAII',102,833.500,51,'#181c1e',13],['Honolulu',122.500,801,50,'#141617',13.500],['Hilo',175.500,826,22,'#1e2121',13.500],
    ['Seattle',631,338,42,'#131414',13.500,400,1],['Guatemala',1075,892,60,'#121414',13.500,500]];
  const lab = ([t, x, y, w, c, s, b]) => `<text x="${x}" y="${y}" textLength="${w}" font-size="${s}" font-weight="${b || 400}" fill="${c}" stroke="#3a3f3d" stroke-opacity=".6" stroke-width="${/North|Atl|Oce/.test(t) ? 0 : 2.500}" paint-order="stroke">${t}</text>`;
  r.querySelector('.labels').innerHTML = L.filter(l => !l[7]).map(lab).join('');
  r.querySelector('.dots').innerHTML =
    '<g font-family="Roboto" stroke-linejoin="round">' + L.filter(l => l[7]).map(lab).join('') + '</g>' +
    draw(east, 'translate(1260 210) scale(.42088 .33333)', 'M25 610H60L110 560 130 520H165L170 580 195 590 205 640 260 640 295 640 300 690 315 715 260 755 235 790 205 820 190 870 160 900 145 950 125 1000 85 1020 75 1060 62 1140 25 1060z') +
    draw(west, 'translate(0 160) scale(.42088 .33333)', 'M1530 400H1560V860L1540 850 1500 830 1510 760 1515 690 1500 650 1495 560 1535 530z');
});

define('timeline-player', `<style>
:host{display:flex;align-items:center;height:63px;background:#131313;border-top:13px solid #3a3a3a;padding-left:31px;box-sizing:content-box}
.y{font:bold 30px/34px "Liberation Sans",sans-serif;color:#43360f;margin-top:1px}
.p{width:93px;height:63px;background:#232e1f;margin-left:25px;margin-right:26px;display:flex;align-items:center;justify-content:center;box-shadow:0 0 10px 1px rgba(20,22,16,.8)}
.p svg{width:40px;height:40px}
.s{width:1141px;height:10px;border-radius:5px;background:#202020;position:relative}
.s i{position:absolute;right:-9px;top:-5px;width:19px;height:19px;border-radius:50%;background:#262626}
</style><fit-text class="y" w="67">1940</fit-text><div class="p"><svg viewBox="0 0 40 40"><circle cx="20" cy="20" r="17.500" fill="none" stroke="#3c3c3c" stroke-width="3.800"/><path d="M15 11.500L30 20 15 28.500z" fill="#3c3c3c"/></svg></div><div class="s"><i></i></div>`);

define('library-footer', `<style>
:host{display:flex;align-items:center;height:60px;background:#0d0d0d;padding-left:31px;padding-right:47px;font:19px "Liberation Sans",sans-serif;color:#404040}
fit-text{margin-right:24px}
.tw{margin-left:auto;margin-right:29px}
</style><fit-text w="117">VCU Libraries</fit-text><fit-text w="285">Virginia Commonwealth University</fit-text><fit-text w="65">Contact</fit-text><fit-text w="53">Giving</fit-text><ui-icon class="tw" name="twitter" size="29"></ui-icon><ui-icon name="fb" size="28"></ui-icon>`);

define('modal-button', `<style>
:host{display:flex;align-items:center;justify-content:center;box-sizing:border-box;height:43px;border:1px solid #d0d0d0;border-radius:3px;background:linear-gradient(#fff,#ededed);color:#333;font:bold 16.250px/20px "Liberation Sans",sans-serif;padding-bottom:2px}
:host([primary]){color:#fff;border-color:#5ba942;background:linear-gradient(#8bdb6c,#5fb043);text-shadow:0 -1px 1px rgba(0,0,0,.25)}
span{text-decoration:underline;text-underline-offset:2px}
</style><span><slot></slot></span>`);

define('intro-modal', `<style>
:host{display:block;position:absolute;left:648px;top:250px;width:625px;height:610px;background:#fff;box-sizing:border-box;padding:51px 25px 0 24px;color:#111;font:20px/32px "Liberation Sans",Arial,sans-serif}
h1{font-size:20px;line-height:32px;margin:0 0 27px;color:#000}
p{margin:0 0 20px;white-space:nowrap}
fit-text{display:block}
.b{display:flex;gap:6px}
.x{position:absolute;right:20px;top:19px;width:16px;height:16px}
</style>
<svg class="x" viewBox="0 0 16 16"><path d="M2 2l12 12M14 2L2 14" stroke="#777" stroke-width="2.600"/></svg>
<h1><fit-text w="433">Mapping the Second Ku Klux Klan, 1915-1940</fit-text></h1>
<p><fit-text w="545">This is a rough timeline of the rise of the second Ku Klux Klan</fit-text><fit-text w="526">between 1915 and 1940. Each red dot shows a local unit or</fit-text><fit-text w="88">"Klavern."</fit-text></p>
<p><fit-text w="540">The first Klan of Reconstruction and the third Klan of the Civil</fit-text><fit-text w="544">Rights era were both concentrated in the Deep South, but the</fit-text><fit-text w="558">second Klan spread across the United States. That tells us that</fit-text><fit-text w="565">parts of the Klan’s appeal (racism, anti-Semitism, and above all,</fit-text><fit-text w="312">anti-Catholicism) were widespread.</fit-text></p>
<p><fit-text w="570">This map invites you to learn about the second Klan in your area</fit-text><fit-text w="521">and across the U.S. and to study the courage of those who</fit-text><fit-text w="161">opposed the Klan.</fit-text></p>
<div class="b"><modal-button primary style="width:159px">Explore the map</modal-button><modal-button style="width:121px">Learn more</modal-button></div>`);

define('task-bar', `<style>
:host{display:flex;align-items:center;height:60px;background:linear-gradient(90deg,#e3edf5 0,#dfe8f4 25%,#d4dff3 32%,#d6e1f5 40%,#d8dfee 52%,#d6def0 66%,#dde8f4 80%,#e1ecf7 100%);padding-left:603px;color:#1a1a1a;font:15px/24px "Open Sans","Noto Sans",sans-serif}
.c{width:55.050px;height:60px;display:flex;align-items:center;justify-content:center;position:relative;flex:none}
.c.on::before{content:"";position:absolute;left:3px;top:6px;width:48px;height:48px;border-radius:5px;background:#ebf0f9;box-shadow:0 1px 1px #c5cddd}
.c ui-icon{position:relative}
.c.on::after,.c.run::after{content:"";position:absolute;bottom:6px;left:24px;width:7px;height:4px;border-radius:2px;background:#7c828c}
.c.on::after{left:17px;width:20px;background:#0b78d0}
.tray{display:flex;align-items:center;margin-left:auto;padding-right:24px}
.tray ui-icon{margin-right:10px}
.clk{display:flex;flex-direction:column;align-items:flex-end;line-height:20px;margin-left:24px;margin-right:9px;margin-top:-2px}
.n{width:20px;height:20px;border-radius:50%;background:#0b78d8;color:#fff;font-size:12.500px;line-height:20px;text-align:center}
</style>
<div class="c"><ui-icon name="win" size="30"></ui-icon></div><div class="c"><ui-icon name="search" size="30"></ui-icon></div><div class="c"><ui-icon name="task" size="30"></ui-icon></div><div class="c"><ui-icon name="widgets" size="30"></ui-icon></div><div class="c"><ui-icon name="chat" size="30"></ui-icon></div><div class="c run"><ui-icon name="files" size="30"></ui-icon></div><div class="c"><ui-icon name="store" size="30"></ui-icon></div><div class="c"><ui-icon name="mail" size="30"></ui-icon></div><div class="c"><ui-icon name="L" size="30"></ui-icon></div><div class="c"><ui-icon name="alexa" size="30"></ui-icon></div><div class="c on"><ui-icon name="edge" size="31"></ui-icon></div><div class="c"><ui-icon name="orange" size="30"></ui-icon></div><div class="c run"><ui-icon name="word" size="30"></ui-icon></div>
<div class="tray"><ui-icon name="chev" size="18" style="margin-right:11px"></ui-icon><ui-icon name="cloud" size="21" style="margin-right:14px"></ui-icon><ui-icon name="loc" size="20" style="margin-right:21px"></ui-icon><ui-icon name="wifi" size="20"></ui-icon><ui-icon name="sound" size="20"></ui-icon><ui-icon name="batt" size="21" style="margin-right:0"></ui-icon><div class="clk"><fit-text w="51">8:41 PM</fit-text><fit-text w="58">2/1/2022</fit-text></div><div class="n">2</div></div>`);

define('app-desktop', `<style>:host{display:flex;flex-direction:column;width:1920px;height:1080px;position:relative;overflow:hidden}:host>*{flex:none}tab-strip,tool-bar,university-header,map-header,klavern-map,timeline-player,library-footer,task-bar{flex:none}</style>
<tab-strip></tab-strip><tool-bar></tool-bar><university-header></university-header><map-header></map-header><klavern-map></klavern-map><timeline-player></timeline-player><library-footer></library-footer><task-bar></task-bar><intro-modal></intro-modal>`);
</script>
</body>
</html>
